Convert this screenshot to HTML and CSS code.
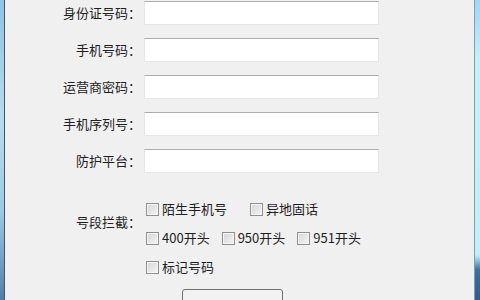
FILE: index.html
```html
<!DOCTYPE html>
<html lang="zh-CN">
<head>
  <meta charset="UTF-8">
  <title>号码设置</title>
  <link rel="stylesheet" href="styles.css">
</head>
<body>
  <div class="frameLeft"></div>

  <!-- 设置面板 -->
  <div class="panel">
    <div class="fields">
      <label class="fieldLabel">身份证号码：</label><input class="textBox" type="text">
      <label class="fieldLabel">手机号码：</label><input class="textBox" type="text">
      <label class="fieldLabel">运营商密码：</label><input class="textBox" type="text">
      <label class="fieldLabel">手机序列号：</label><input class="textBox" type="text">
      <label class="fieldLabel">防护平台：</label><input class="textBox" type="text">
    </div>

    <div class="blockGroup">
      <div class="blockLabel">号段拦截：</div>
      <div class="blockOptions">
        <div class="optionRow wide">
          <label class="option"><input type="checkbox">陌生手机号</label>
          <label class="option"><input type="checkbox">异地固话</label>
        </div>
        <div class="optionRow">
          <label class="option"><input type="checkbox">400开头</label>
          <label class="option"><input type="checkbox">950开头</label>
          <label class="option"><input type="checkbox">951开头</label>
        </div>
        <div class="optionRow">
          <label class="option"><input type="checkbox">标记号码</label>
        </div>
      </div>
    </div>

    <!-- 按钮文字在窗口下方，截图里看不到 -->
    <button class="saveBtn" aria-label="保存"></button>
  </div>

  <div class="frameRight"></div>
</body>
</html>
```

FILE: styles.css
```css
html, body {
  margin: 0;
  height: 100%;
  overflow: hidden;
}

body {
  display: flex;
  width: 480px;
  height: 300px;
  font-family: "Noto Sans CJK SC", "Microsoft YaHei", sans-serif;
  font-size: 13px;
  color: #1e1e1e;
}

.frameLeft {
  width: 4px;
  background: linear-gradient(#8cc4e4, #b6dcef 40%, #9ccbe6 70%, #4f7fa8);
  border-right: 1px solid #3b5870;
}

.frameRight {
  width: 5px;
  border-left: 1px solid #8c99a6;
  background: linear-gradient(#9fd6f2, #c4f2fc 20%, #c0f0fb 85%, #3f6f9c 90%, #2f5a86);
}

.panel {
  flex: 1;
  background-color: #f0f0f0;
  padding-top: 1px;
}

.fields {
  display: grid;
  grid-template-columns: 139px 235px;
  row-gap: 13px;
}

.fieldLabel {
  text-align: right;
  padding-right: 3px;
  line-height: 24px;
}

.textBox {
  height: 24px;
  box-sizing: border-box;
  margin: 0;
  padding: 0 3px;
  border: 1px solid #e3e7ec;
  border-top-color: #abadb3;
  background: #fff;
  outline: none;
}

.blockGroup {
  display: grid;
  grid-template-columns: 139px auto;
  margin-top: 28px;
}

.blockLabel {
  text-align: right;
  padding-right: 3px;
  padding-top: 13px;
  line-height: 16px;
}

.blockOptions {
  display: flex;
  flex-direction: column;
  gap: 13px;
  padding-left: 2px;
}

.optionRow {
  display: flex;
  gap: 12px;
  height: 16px;
}

.optionRow.wide {
  gap: 23px;
}

.option {
  display: flex;
  align-items: center;
  gap: 3px;
  line-height: 16px;
  white-space: nowrap;
}

.option input {
  appearance: none;
  -webkit-appearance: none;
  width: 13px;
  height: 13px;
  margin: 0;
  border: 1px solid #8e8f8f;
  background: linear-gradient(135deg, #d6d6d6, #f4f4f4);
  box-shadow: inset 0 0 0 1px #f6f6f6;
}

.saveBtn {
  display: block;
  margin: 14px 0 0 177px;
  width: 101px;
  height: 23px;
  border: 1px solid #707070;
  border-radius: 3px;
  background: linear-gradient(#f2f2f2 50%, #dddddd 50%);
}
```
